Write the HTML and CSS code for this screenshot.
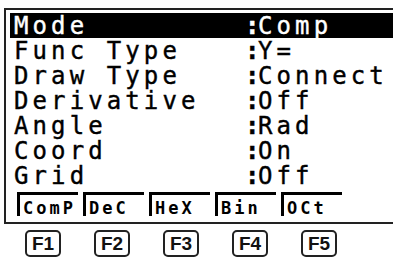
FILE: index.html
```html
<!DOCTYPE html>
<html>
<head>
<meta charset="utf-8">
<link rel="stylesheet" href="styles.css">
</head>
<body>
<div class="screen">
  <div class="rows">
    <div class="row sel"><span class="lbl">Mode</span><span class="colon">:</span><span class="val">Comp</span></div>
    <div class="row"><span class="lbl">Func Type</span><span class="colon">:</span><span class="val">Y=</span></div>
    <div class="row"><span class="lbl">Draw Type</span><span class="colon">:</span><span class="val">Connect</span></div>
    <div class="row"><span class="lbl">Derivative</span><span class="colon">:</span><span class="val">Off</span></div>
    <div class="row"><span class="lbl">Angle</span><span class="colon">:</span><span class="val">Rad</span></div>
    <div class="row"><span class="lbl">Coord</span><span class="colon">:</span><span class="val">On</span></div>
    <div class="row"><span class="lbl">Grid</span><span class="colon">:</span><span class="val">Off</span></div>
  </div>
  <div class="tabs">
    <div class="tab">ComP</div>
    <div class="tab">DeC</div>
    <div class="tab">HeX</div>
    <div class="tab">Bin</div>
    <div class="tab">OCt</div>
  </div>
</div>
<div class="keys">
  <div class="key">F1</div>
  <div class="key">F2</div>
  <div class="key">F3</div>
  <div class="key">F4</div>
  <div class="key">F5</div>
</div>
</body>
</html>
```
FILE: styles.css
```css
html, body {
  margin: 0;
  padding: 0;
  background: #fff;
}
body {
  width: 393px;
  height: 259px;
  overflow: hidden;
}
.screen {
  margin: 8px 0 0 4px;
  border: 2px solid #222;
  border-right: none;
  height: 204px;
  padding: 3px 0 5px 4px;
  box-sizing: content-box;
  display: flex;
  flex-direction: column;
}
.rows {
  display: flex;
  flex-direction: column;
}
.row {
  height: 25px;
  display: grid;
  grid-template-columns: 231px 13px auto;
  font-family: "DejaVu Sans Mono", monospace;
  font-size: 24px;
  letter-spacing: 4.1px;
  line-height: 26px;
  color: #000;
  padding-left: 4px;
  -webkit-text-stroke: 0.4px currentColor;
}
.row.sel {
  background: #000;
  color: #fff;
}
.colon {
  font-weight: bold;
  letter-spacing: 0;
}
.tabs {
  margin-top: 4px;
  display: flex;
  gap: 5px;
  padding-left: 7px;
}
.tab {
  width: 61px;
  height: 24px;
  box-sizing: border-box;
  border-top: 3px solid #000;
  border-left: 3px solid #000;
  padding-left: 3px;
  padding-top: 4px;
  font-family: "DejaVu Sans Mono", monospace;
  font-weight: bold;
  font-size: 17px;
  letter-spacing: 3px;
  line-height: 18px;
}
.keys {
  display: flex;
  gap: 33px;
  margin: 6px 0 0 25px;
}
.key {
  width: 36px;
  height: 27px;
  box-sizing: border-box;
  border: 2px solid #222;
  border-radius: 5px;
  font-family: "Liberation Sans", Arial, sans-serif;
  font-weight: bold;
  font-size: 19px;
  line-height: 23px;
  text-align: center;
  color: #111;
}
```
